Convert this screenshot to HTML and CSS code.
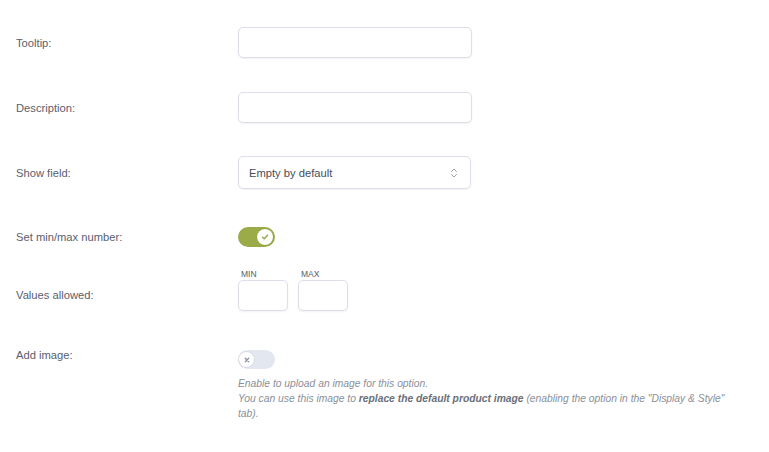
FILE: index.html
```html
<!DOCTYPE html>
<html lang="en">
<head>
  <meta charset="UTF-8" />
  <title>Option settings</title>
  <link rel="stylesheet" href="styles.css">
</head>
<body>
  <div class="options">
    <div class="row">
      <label class="label">Tooltip:</label>
      <div class="field"><input type="text" class="text-input" /></div>
    </div>

    <div class="row">
      <label class="label">Description:</label>
      <div class="field"><input type="text" class="text-input" /></div>
    </div>

    <div class="row">
      <label class="label">Show field:</label>
      <div class="field">
        <div class="select">
          <span>Empty by default</span>
          <svg class="select-arrows" width="8" height="12" viewBox="0 0 8 12">
            <path d="M1.5 4.5 L4 2 L6.5 4.5" fill="none" stroke="#9aa0ad" stroke-width="1" stroke-linecap="round" stroke-linejoin="round"/>
            <path d="M1.5 7.5 L4 10 L6.5 7.5" fill="none" stroke="#9aa0ad" stroke-width="1" stroke-linecap="round" stroke-linejoin="round"/>
          </svg>
        </div>
      </div>
    </div>

    <div class="row row-toggle">
      <label class="label">Set min/max number:</label>
      <div class="field">
        <span class="toggle on">
          <span class="knob">
            <svg width="8" height="8" viewBox="0 0 8 8"><path d="M1.5 4.2 L3.3 5.8 L6.5 2.3" fill="none" stroke="#94a642" stroke-width="1.4" stroke-linecap="round" stroke-linejoin="round"/></svg>
          </span>
        </span>
      </div>
    </div>

    <div class="row row-minmax">
      <label class="label">Values allowed:</label>
      <div class="field minmax">
        <div class="small-field">
          <span class="small-label">MIN</span>
          <input type="text" class="text-input small" />
        </div>
        <div class="small-field">
          <span class="small-label">MAX</span>
          <input type="text" class="text-input small" />
        </div>
      </div>
    </div>

    <div class="row row-image">
      <label class="label">Add image:</label>
      <div class="field">
        <span class="toggle off">
          <span class="knob">
            <svg width="8" height="8" viewBox="0 0 8 8"><path d="M2.3 2.3 L5.7 5.7 M5.7 2.3 L2.3 5.7" fill="none" stroke="#8b93a6" stroke-width="1.4" stroke-linecap="round"/></svg>
          </span>
        </span>
        <p class="help">
          Enable to upload an image for this option.<br>
          You can use this image to <b>replace the default product image</b> (enabling the option in the "Display &amp; Style" tab).
        </p>
      </div>
    </div>
  </div>
</body>
</html>
```

FILE: styles.css
```css
body {
  margin: 0;
  background: #ffffff;
  font-family: "Liberation Sans", Arial, sans-serif;
  color: #5c6270;
}

.options {
  padding: 27px 0 0 16px;
}

.row {
  display: flex;
  align-items: center;
  margin-bottom: 33px;
}

.row:first-child {
  margin-bottom: 34px;
}

.label {
  width: 222px;
  flex-shrink: 0;
  font-size: 11.2px;
  color: #5a606d;
}

.field {
  flex: 1;
}

.text-input {
  display: block;
  box-sizing: border-box;
  width: 234px;
  height: 31px;
  border: 1px solid #dcdfe8;
  border-radius: 5px;
  box-shadow: 0 1px 2px rgba(30, 40, 80, 0.06);
  background: #fff;
  outline: none;
}

.select {
  box-sizing: border-box;
  width: 233px;
  height: 33px;
  border: 1px solid #dcdfe8;
  border-radius: 5px;
  box-shadow: 0 1px 2px rgba(30, 40, 80, 0.06);
  display: flex;
  align-items: center;
  justify-content: space-between;
  padding: 0 12px 0 10px;
  font-size: 11.2px;
  color: #474c57;
}

.row-toggle {
  margin-bottom: 17px;
}

.row-toggle .field {
  height: 30px;
  display: flex;
  align-items: center;
}

.toggle {
  display: flex;
  align-items: center;
  box-sizing: border-box;
  width: 37px;
  height: 20px;
  border-radius: 10px;
  padding: 2px;
}

.toggle.on {
  background: #9aab48;
  justify-content: flex-end;
}

.toggle.off {
  background: #e3e7f0;
  height: 19px;
}

.knob {
  width: 16px;
  height: 16px;
  border-radius: 50%;
  background: #fff;
  display: flex;
  align-items: center;
  justify-content: center;
  box-shadow: 0 0 1px rgba(0, 0, 0, 0.25);
}

.toggle.off .knob {
  width: 15px;
  height: 15px;
  margin-left: -1px;
  box-shadow: 0 0 0 1px #d8dce6;
}

.row-minmax {
  align-items: flex-end;
  margin-bottom: 39px;
}

.row-minmax .label {
  line-height: 31px;
}

.minmax {
  display: flex;
  gap: 10px;
}

.small-label {
  display: block;
  font-size: 8.5px;
  color: #555b66;
  line-height: 10px;
  margin: 0 0 1px 3px;
}

.text-input.small {
  width: 50px;
}

.row-image {
  align-items: flex-start;
}

.row-image .label {
  margin-top: -1px;
}

.help {
  margin: 7px 0 0;
  padding-right: 44px;
  font-size: 10.3px;
  line-height: 15px;
  font-style: italic;
  color: #8a8f99;
}

.help b {
  color: #6b707a;
}
```
